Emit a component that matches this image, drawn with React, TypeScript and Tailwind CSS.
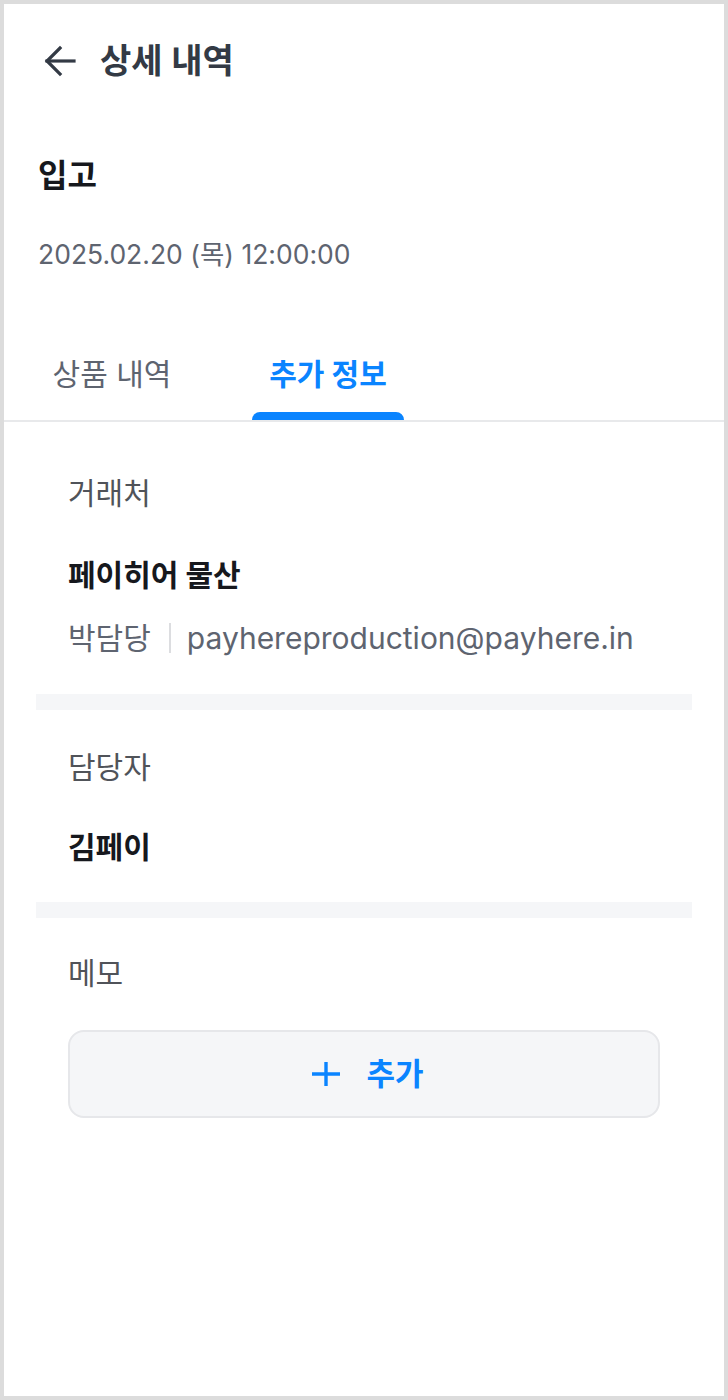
import { useState } from "react";

const FONT = { fontFamily: "Inter, 'Noto Sans CJK KR', sans-serif" };

function BackArrow() {
    return (
        <svg width="32" height="32" viewBox="0 0 32 32" fill="none" stroke="currentColor" strokeWidth={3.2} strokeLinecap="square" strokeLinejoin="miter">
            <path d="M30 16H3" />
            <path d="M16 3L3 16l13 13" />
        </svg>
    );
}

function PlusIcon() {
    return (
        <svg width="28" height="28" viewBox="0 0 28 28" fill="none" stroke="currentColor" strokeWidth={3.4}>
            <path d="M14 2v24M0 14h28" />
        </svg>
    );
}

export default function App() {
    const [tab, setTab] = useState(1);
    const tabs = ["상품 내역", "추가 정보"];

    return (
        <div className="min-h-[1400px] w-[728px] border-4 border-[#dcdcdc] bg-white text-[#111]" style={FONT}>
            {/* Header */}
            <div className="flex h-[114px] items-center gap-[24px] pl-[40px] text-[#333a45]">
                <BackArrow />
                <h1 className="text-[34px] font-semibold leading-none">상세 내역</h1>
            </div>

            {/* Title */}
            <div className="px-[34px]">
                <div className="mt-[40px] text-[32px] font-bold leading-[36px] text-[#16181d]">입고</div>
                <div className="mt-[44px] text-[26.5px] leading-[32px] text-[#5e6470]">2025.02.20 (목) 12:00:00</div>
            </div>

            {/* Tabs */}
            <div className="mt-[84px] flex gap-[64px] border-b-2 border-[#e8e9eb] px-[32px]">
                {tabs.map((t, i) => (
                    <button
                        key={t}
                        onClick={() => setTab(i)}
                        className={`flex w-[152px] flex-col items-center text-[30px] leading-[40px] ${i === tab ? "font-bold text-[#0a84ff]" : "text-[#5e6470]"}`}
                    >
                        <span>{t}</span>
                        <span className={`mt-[18px] h-[8px] w-full rounded-t-[8px] ${i === tab ? "bg-[#0a84ff]" : "bg-transparent"}`} />
                    </button>
                ))}
            </div>

            {/* Content */}
            <div className="px-[32px]">
                <section className="px-[32px] pb-[36px] pt-[51px]">
                    <div className="text-[30px] leading-[40px] text-[#505359]">거래처</div>
                    <div className="mt-[42px] text-[30px] font-bold leading-[40px] text-[#16181d]">페이히어 물산</div>
                    <div className="mt-[23px] flex items-center text-[30px] leading-[40px] text-[#5e6470]">
                        <span>박담당</span>
                        <span className="ml-[18px] mr-[16px] h-[30px] w-[2px] bg-[#dcdde0]" />
                        <span>payhereproduction@payhere.in</span>
                    </div>
                </section>

                <div className="h-[16px] bg-[#f5f6f8]" />

                <section className="px-[32px] pb-[35px] pt-[37px]">
                    <div className="text-[30px] leading-[40px] text-[#505359]">담당자</div>
                    <div className="mt-[40px] text-[30px] font-bold leading-[40px] text-[#16181d]">김페이</div>
                </section>

                <div className="h-[16px] bg-[#f5f6f8]" />

                <section className="px-[32px] pt-[35px]">
                    <div className="text-[30px] leading-[40px] text-[#505359]">메모</div>
                    <button className="mt-[37px] flex h-[88px] w-full items-center justify-center gap-[26px] rounded-[16px] border-2 border-[#e6e7ea] bg-[#f5f6f8] pl-[8px] text-[#0a84ff]">
                        <PlusIcon />
                        <span className="text-[31px] font-semibold leading-[40px]">추가</span>
                    </button>
                </section>
            </div>
        </div>
    );
}
